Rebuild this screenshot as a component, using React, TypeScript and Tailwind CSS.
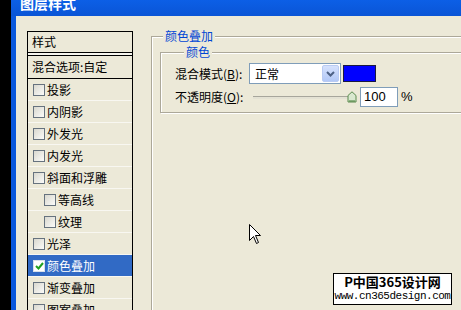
const items = [
  { label: "投影" },
  { label: "内阴影" },
  { label: "外发光" },
  { label: "内发光" },
  { label: "斜面和浮雕" },
  { label: "等高线", indent: true },
  { label: "纹理", indent: true },
  { label: "光泽" },
  { label: "颜色叠加", checked: true, selected: true },
  { label: "渐变叠加" },
  { label: "图案叠加" },
];

function CheckBox({ checked }: { checked?: boolean }) {
  if (checked) {
    return (
      <span className="flex h-[12px] w-[12px] shrink-0 items-center justify-center border border-[#d8e0ea] bg-white">
        <svg width="9" height="8" viewBox="0 0 9 8">
          <path d="M1 4 L3.5 6.5 L8 1" fill="none" stroke="#21a121" strokeWidth="2" />
        </svg>
      </span>
    );
  }
  return (
    <span className="h-[12px] w-[12px] shrink-0 border border-[#66727e] bg-gradient-to-br from-[#d9d8cf] to-[#fbfbf9]" />
  );
}

export default function App() {
  return (
    <div className="relative flex h-[310px] w-[461px] overflow-hidden bg-black font-['Noto_Sans_CJK_SC',sans-serif] text-[12px] text-black">
      <div className="w-[11px] shrink-0 bg-black" />
      <div className="flex min-w-0 flex-1 flex-col">
        {/* title bar */}
        <div className="h-[16px] shrink-0 overflow-hidden bg-gradient-to-b from-[#0c5fe6] to-[#0a55d6] pl-[9px]">
          <div className="mt-[-5px] text-[14px] font-bold leading-[16px] text-white">图层样式</div>
        </div>

        <div className="flex min-h-0 flex-1">
          <div className="w-[5px] shrink-0 bg-[#0a58dc]" />
          <div className="flex min-w-0 flex-1 overflow-hidden bg-[#ece9d8] pl-[11px]">
            {/* styles list */}
            <div className="mt-[15px] w-[106px] shrink-0 self-start border border-black">
              <div className="flex h-[21px] items-center border-b border-black pl-[4px]">样式</div>
              <div className="h-[2px] bg-[#f6f5ee]" />
              <div className="flex h-[24px] items-center border-y border-black pl-[4px]">混合选项:自定</div>
              {items.map((it) => (
                <div
                  key={it.label}
                  className={`flex h-[22px] items-center gap-[2px] border-b border-[#f8f7f1] ${
                    it.indent ? "pl-[16px]" : "pl-[5px]"
                  } ${it.selected ? "bg-[#316ac5] text-white" : ""}`}
                >
                  <CheckBox checked={it.checked} />
                  <span className="leading-[14px]">{it.label}</span>
                </div>
              ))}
            </div>

            {/* right panel */}
            <div className="ml-[18px] shrink-0 pt-[12px]">
              <fieldset className="h-[320px] w-[330px] border border-[#aca899] shadow-[inset_1px_1px_0_#fff,1px_1px_0_#fff]">
                <legend className="ml-[11px] bg-[#ece9d8] px-[2px] leading-[16px] text-[#0046d5]">颜色叠加</legend>
                <fieldset className="ml-[8px] w-[330px] border border-[#aca899] pb-[5px] pl-[14px] shadow-[inset_1px_1px_0_#fff,1px_1px_0_#fff]">
                  <legend className="ml-[9px] bg-[#ece9d8] px-[2px] leading-[16px] text-[#0046d5]">颜色</legend>

                  <div className="mt-[3px] flex h-[21px] items-center">
                    <span className="w-[74px] shrink-0">
                      混合模式(<span className="underline">B</span>):
                    </span>
                    <div className="flex h-[21px] w-[92px] items-center justify-between border border-[#7f9db9] bg-white pl-[5px] pr-[1px]">
                      <span>正常</span>
                      <span className="flex h-[17px] w-[17px] items-center justify-center rounded-[2px] border border-[#b9cbf3] bg-gradient-to-b from-[#d6e2fd] to-[#b2c8f7]">
                        <svg width="9" height="6" viewBox="0 0 9 6">
                          <path d="M1 1 L4.5 4.5 L8 1" fill="none" stroke="#4d6185" strokeWidth="2" />
                        </svg>
                      </span>
                    </div>
                    <div className="ml-[2px] h-[17px] w-[33px] border border-[#1a1a40] bg-[#0000ff]" />
                  </div>

                  <div className="mt-[3px] flex h-[20px] items-center">
                    <span className="w-[74px] shrink-0">
                      不透明度(<span className="underline">O</span>):
                    </span>
                    <div className="flex w-[111px] items-center pl-[4px]">
                      <div className="h-[3px] w-[95px] border-t border-[#a7a69c] border-b-white bg-[#e4e2d4]" />
                      <svg width="10" height="12" viewBox="0 0 10 12" className="-ml-[1px]">
                        <path d="M1 4.5 L5 0.8 L9 4.5 L9 11 L1 11 Z" fill="#d9e8cf" stroke="#5a8a4e" strokeWidth="1" />
                        <path d="M2 10 L8 10" stroke="#3f7a33" strokeWidth="1" />
                      </svg>
                    </div>
                    <div className="flex h-[20px] w-[38px] items-center border border-[#7f9db9] bg-white pl-[3px] font-['Liberation_Sans',sans-serif] text-[13px]">
                      100
                    </div>
                    <span className="ml-[3px] font-['Liberation_Sans',sans-serif] text-[13px]">%</span>
                  </div>
                </fieldset>
              </fieldset>
            </div>
          </div>
        </div>
      </div>

      {/* mouse cursor */}
      <svg className="absolute left-[249px] top-[224px]" width="13" height="21" viewBox="0 0 13 21">
        <path d="M0.5 0.5 L0.5 16.5 L4.5 12.5 L7.5 19.5 L9.5 18.5 L6.5 11.5 L11.5 11.5 Z" fill="#fff" stroke="#000" strokeWidth="1" />
      </svg>

      {/* watermark */}
      <div className="absolute left-[333px] top-[273px] flex h-[32px] w-[119px] flex-col items-center justify-center border border-black bg-white leading-[14px]">
        <span className="text-[13px] font-bold">P中国365设计网</span>
        <span className="font-['Liberation_Mono',monospace] text-[11px] tracking-[-0.5px]">www.cn365design.com</span>
      </div>
    </div>
  );
}
